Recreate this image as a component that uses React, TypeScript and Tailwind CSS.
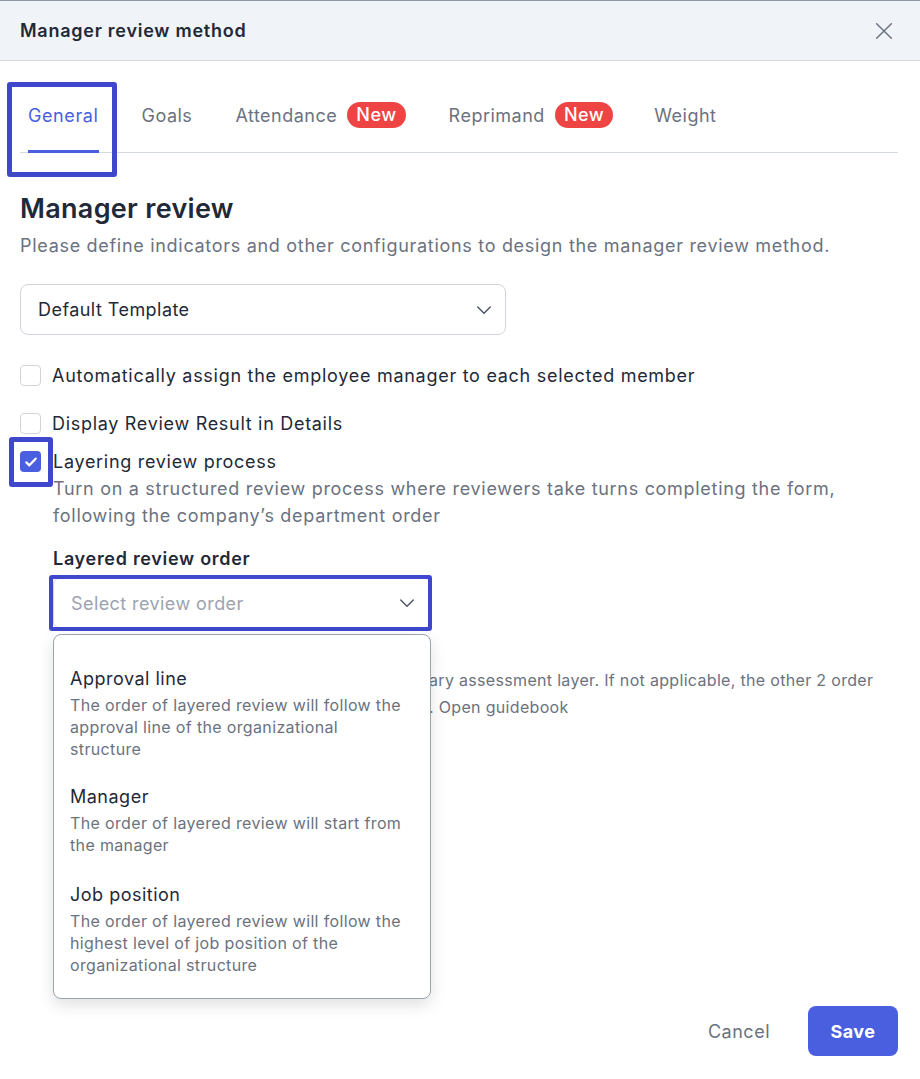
import React from 'react';

const font = { fontFamily: 'Inter, "Noto Sans", sans-serif' };

function Chevron({ className = "" }: { className?: string }) {
  return (
    <svg className={className} width="20" height="20" viewBox="0 0 24 24" fill="none" stroke="currentColor" strokeWidth="1.7" strokeLinecap="round" strokeLinejoin="round">
      <path d="M4.5 8.5l7.5 7.5 7.5-7.5" />
    </svg>
  );
}

function Checkbox({ checked = false }: { checked?: boolean }) {
  if (checked) {
    return (
      <span className="flex h-[21px] w-[21px] shrink-0 items-center justify-center rounded-[4px] bg-[#4a5fdf]">
        <svg width="16" height="16" viewBox="0 0 24 24" fill="none" stroke="white" strokeWidth="3.4" strokeLinecap="round" strokeLinejoin="round">
          <path d="M5 12.5l4.5 4.5L19 7" />
        </svg>
      </span>
    );
  }
  return <span className="h-[21px] w-[21px] shrink-0 rounded-[4px] border-[1.5px] border-[#d1d5db] bg-white" />;
}

function Badge() {
  return (
    <span className="ml-[10px] rounded-full bg-[#ef4444] px-[9px] text-[18px] leading-[26px] font-medium text-white">New</span>
  );
}

const options = [
  { title: 'Approval line', desc: 'The order of layered review will follow the approval line of the organizational structure', mt: '' },
  { title: 'Manager', desc: 'The order of layered review will start from the manager', mt: 'mt-[25px]' },
  { title: 'Job position', desc: 'The order of layered review will follow the highest level of job position of the organizational structure', mt: 'mt-[27px]' },
];

export default function App() {
  return (
    <div className="min-h-[1079px] w-[920px] bg-white text-[#1f2937]" style={font}>
      {/* Header */}
      <div className="flex h-[61px] items-center justify-between border-t border-b border-t-[#8f98ab] border-b-[#d5d9e0] bg-[#f0f3f8] pl-[20px] pr-[25px]">
        <h1 className="text-[18px] font-semibold tracking-[0.75px] text-[#1f2937]">Manager review method</h1>
        <svg width="22" height="22" viewBox="0 0 24 24" fill="none" stroke="#6b7280" strokeWidth="1.6" strokeLinecap="round">
          <path d="M4 4l16 16M20 4L4 20" />
        </svg>
      </div>

      <div className="px-[20px] pr-[22px]">
        {/* Tabs */}
        <div className="mt-[21px] flex h-[71px] items-end border-b border-[#d5d9e0] pb-[4px] text-[18px] tracking-[0.5px] text-[#6b7280]">
          <div className="relative ml-[8px] mr-[43px] flex h-full flex-col items-center justify-center">
            <span className="tracking-[0.6px] text-[#4a5fdf]">General</span>
            <span className="absolute bottom-[-5px] left-0 right-0 h-[3px] bg-[#4a5fdf]" />
            <span className="absolute -left-[21px] -right-[18px] top-0 -bottom-[29px] rounded-[3px] border-[5px] border-[#3f47cc]" />
          </div>
          <div className="mr-[43px] flex h-full items-center">Goals</div>
          <div className="mr-[43px] flex h-full items-center">Attendance<Badge /></div>
          <div className="mr-[41px] flex h-full items-center">Reprimand<Badge /></div>
          <div className="flex h-full items-center">Weight</div>
        </div>

        {/* Section */}
        <h2 className="mt-[39px] text-[27px] leading-[34px] font-semibold tracking-[0.3px] text-[#1f2937]">Manager review</h2>
        <p className="mt-[7px] text-[18px] leading-[26px] tracking-[0.7px] text-[#6b7280]">Please define indicators and other configurations to design the manager review method.</p>

        <div className="mt-[25px] flex h-[51px] w-[486px] items-center justify-between rounded-[8px] border border-[#d1d5db] pl-[17px] pr-[11px] text-[18px] tracking-[0.45px] text-[#1f2937]">
          <span>Default Template</span>
          <Chevron className="text-[#4b5563]" />
        </div>

        <label className="mt-[27px] flex items-center gap-[11px] text-[18px] leading-[27px] tracking-[0.72px]">
          <Checkbox />
          <span>Automatically assign the employee manager to each selected member</span>
        </label>
        <label className="mt-[21px] flex items-center gap-[11px] text-[18px] leading-[27px] tracking-[0.7px]">
          <Checkbox />
          <span>Display Review Result in Details</span>
        </label>

        <div className="mt-[11px] flex gap-[12px]">
          <div className="relative mt-[3px] h-[21px]">
            <Checkbox checked />
            <span className="absolute -left-[11px] -right-[12px] -top-[14px] -bottom-[15px] rounded-[3px] border-[5px] border-[#3f47cc]" />
          </div>
          <div className="flex-1">
            <div className="text-[18px] leading-[27px] tracking-[0.7px]">Layering review process</div>
            <p className="text-[18px] leading-[27px] tracking-[0.7px] text-[#6b7280]">Turn on a structured review process where reviewers take turns completing the form, following the company’s department order</p>

            <div className="mt-[15px] text-[18px] font-semibold leading-[30px] tracking-[0.7px] text-[#1f2937]">Layered review order</div>
            <div className="relative mt-[4px] w-[378px]">
              <div className="flex h-[50px] items-center justify-between rounded-[6px] border border-[#d1d5db] pl-[17px] pr-[13px] text-[18px] tracking-[0.42px] text-[#9ca3af]">
                <span>Select review order</span>
                <Chevron className="text-[#4b5563]" />
              </div>
              <span className="absolute -left-[4px] -right-[1px] -top-[3px] -bottom-[3px] rounded-[3px] border-[4px] border-[#3f47cc]" />

              {/* Dropdown */}
              <div className="absolute left-0 top-[56px] z-10 w-[378px] rounded-[8px] border border-[#9ca3af] bg-white pt-[32px] pb-[22px] pl-[16px] pr-[20px] shadow-[0_6px_16px_rgba(0,0,0,0.12)]">
                {options.map((o) => (
                  <div key={o.title} className={o.mt}>
                    <div className="text-[18px] leading-[24px] tracking-[0.5px] text-[#1f2937]">{o.title}</div>
                    <div className="mt-[3px] text-[16px] leading-[22px] tracking-[0.35px] text-[#6b7280]">{o.desc}</div>
                  </div>
                ))}
              </div>
            </div>

            {/* Helper text, partly covered by the open dropdown */}
            <div className="mt-[39px] text-[16px] leading-[27px] tracking-[0.32px] whitespace-nowrap text-[#6b7280]">
              <div className="flex">
                <span className="w-[376px] shrink-0 overflow-hidden text-right">Approval line will be used as the prim</span>
                <span>ary assessment layer. If not applicable, the other 2 order</span>
              </div>
              <div className="flex">
                <span className="w-[376px] shrink-0 overflow-hidden text-right">options will be applied based on the sequence</span>
                <span>. Open guidebook</span>
              </div>
            </div>
          </div>
        </div>
      </div>

      {/* Footer */}
      <div className="mt-[285px] flex items-center justify-end gap-[38px] pr-[22px]">
        <button className="text-[18px] tracking-[0.5px] text-[#6b7280]">Cancel</button>
        <button className="h-[50px] w-[90px] rounded-[8px] bg-[#4a5fdf] text-[18px] font-bold tracking-[0.5px] text-white">Save</button>
      </div>
    </div>
  );
}
